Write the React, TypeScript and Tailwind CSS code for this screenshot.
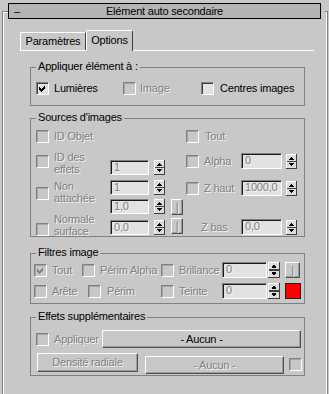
import React from 'react';

const dis = 'text-[#808080] [text-shadow:1px_1px_0_#f4f4f4]';

type CbProps = { checked?: boolean; disabled?: boolean; className?: string };

function Checkbox({ checked, disabled, className = '' }: CbProps) {
  return (
    <div
      className={`h-[13px] w-[13px] shrink-0 border border-t-[#808080] border-l-[#808080] border-b-white border-r-white ${className}`}
    >
      <div
        className={`flex h-full w-full items-center justify-center ${
          disabled
            ? 'bg-[#c8c8c8] shadow-[inset_1px_1px_0_#a4a4a4]'
            : 'bg-[#e2e2e2] shadow-[inset_1px_1px_0_#404040]'
        }`}
      >
        {checked && (
          <svg width="9" height="9" viewBox="0 0 9 9" shapeRendering="crispEdges">
            <polygon
              points="1,3 3,5 7,1 7,4 3,8 1,6"
              fill={disabled ? '#808080' : '#000'}
            />
          </svg>
        )}
      </div>
    </div>
  );
}

type FieldProps = { value: string; className?: string };

function Field({ value, className = '' }: FieldProps) {
  return (
    <div
      className={`shrink-0 border border-t-[#808080] border-l-[#808080] border-b-white border-r-white ${className}`}
    >
      <div
        className={`h-full overflow-hidden bg-[#e2e2e2] pl-[3px] leading-[13px] shadow-[inset_1px_1px_0_#1a1a1a] ${dis}`}
      >
        {value}
      </div>
    </div>
  );
}

function Arrows({ className = '' }: { className?: string }) {
  return (
    <svg
      width="11"
      height="15"
      viewBox="0 0 11 15"
      shapeRendering="crispEdges"
      className={`shrink-0 ${className}`}
    >
      <rect x="0" y="0" width="11" height="15" fill="#dcdcdc" />
      <rect x="0" y="0" width="11" height="1" fill="#ffffff" />
      <rect x="0" y="0" width="1" height="15" fill="#ffffff" />
      <rect x="0" y="14" width="11" height="1" fill="#404040" />
      <rect x="10" y="0" width="1" height="15" fill="#404040" />
      <rect x="1" y="7" width="9" height="1" fill="#404040" />
      <polygon points="2.5,6 8.5,6 5.5,2.5" fill="#000" />
      <polygon points="2.5,9 8.5,9 5.5,12.5" fill="#000" />
    </svg>
  );
}

type BtnProps = { children: React.ReactNode; disabled?: boolean; className?: string };

function Btn({ children, disabled, className = '' }: BtnProps) {
  return (
    <div
      className={`flex shrink-0 items-center justify-center border border-t-white border-l-white border-b-[#505050] border-r-[#505050] bg-[#c8c8c8] shadow-[inset_-1px_-1px_0_#9c9c9c] ${
        disabled ? dis : 'text-black'
      } ${className}`}
    >
      {children}
    </div>
  );
}

type GroupProps = { title: string; className?: string; children: React.ReactNode };

function Group({ title, className = '', children }: GroupProps) {
  return (
    <div className={`relative w-[275px] border border-[#808080] ${className}`}>
      <div className="absolute -top-[8px] left-[5px] bg-[#c8c8c8] px-[2px] leading-[13px]">
        {title}
      </div>
      {children}
    </div>
  );
}

function TwoLines({ a, b }: { a: string; b: string }) {
  return (
    <div className={`ml-[5px] w-[51px] shrink-0 leading-[12px] ${dis}`}>
      <div>{a}</div>
      <div>{b}</div>
    </div>
  );
}

export default function App() {
  return (
    <div className="flex h-[394px] w-[329px] overflow-hidden bg-[#c8c8c8] font-['Liberation_Sans',Arial,sans-serif] text-[11px] leading-[13px] tracking-[-0.2px] text-black">
      <div className="w-[2px] shrink-0" />
      <div className="mt-[11px] h-[383px] w-[6px] shrink-0 border-l border-t border-[#808080] shadow-[inset_1px_1px_0_#fff]" />

      <div className="w-[313px] shrink-0">
        {/* rollout title */}
        <div className="mt-[3px] flex h-[16px] items-center border border-black bg-[#b4b4b4]">
          <span className="w-[24px] pl-[5px]">–</span>
          <span className="flex-1 text-center">Elément auto secondaire</span>
          <span className="w-[24px]" />
        </div>

        {/* tabs */}
        <div className="ml-[12px] mt-[11px] w-[294px]">
          <div className="flex h-[20px] items-end">
            <div className="flex h-[18px] w-[66px] items-center justify-center rounded-tl-[2px] border-l border-t border-r border-l-white border-t-white border-r-[#404040]">
              Paramètres
            </div>
            <div className="relative z-10 -mb-[1px] flex h-[21px] w-[47px] items-center justify-center rounded-t-[2px] border-l border-t border-r border-l-white border-t-white border-r-[#404040] bg-[#c8c8c8] pb-[1px]">
              Options
            </div>
          </div>

          <div className="border-t border-t-white pl-[10px]">
            {/* Appliquer élément à */}
            <Group title="Appliquer élément à :" className="mt-[16px] h-[39px]">
              <div className="flex items-center pl-[5px] pt-[14px]">
                <div className="flex w-[87px] items-center">
                  <Checkbox checked />
                  <span className="ml-[5px]">Lumières</span>
                </div>
                <div className="flex w-[78px] items-center">
                  <Checkbox disabled />
                  <span className={`ml-[4px] ${dis}`}>Image</span>
                </div>
                <div className="flex items-center">
                  <Checkbox />
                  <span className="ml-[6px]">Centres images</span>
                </div>
              </div>
            </Group>

            {/* Sources d'images */}
            <Group title="Sources d'images" className="mt-[12px] h-[119px]">
              <div className="flex pl-[5px]">
                <div className="w-[150px] shrink-0">
                  <div className="mt-[11px] flex h-[13px] items-center">
                    <Checkbox disabled />
                    <span className={`ml-[5px] ${dis}`}>ID Objet</span>
                  </div>

                  <div className="mt-[8px] flex h-[26px] items-start">
                    <Checkbox disabled className="mt-[4px]" />
                    <TwoLines a="ID des" b="effets" />
                    <Field value="1" className="ml-[5px] mt-[9px] h-[15px] w-[39px]" />
                    <Arrows className="ml-[5px] mt-[9px]" />
                  </div>

                  <div className="mt-[3px] flex h-[33px] items-start">
                    <Checkbox disabled className="mt-[7px]" />
                    <TwoLines a="Non" b="attachée" />
                    <div className="ml-[5px]">
                      <div className="flex">
                        <Field value="1" className="h-[15px] w-[39px]" />
                        <Arrows className="ml-[5px]" />
                      </div>
                      <div className="mt-[4px] flex">
                        <Field value="1,0" className="h-[15px] w-[39px]" />
                        <Arrows className="ml-[5px]" />
                        <Btn disabled className="ml-[6px] h-[16px] w-[12px]">|</Btn>
                      </div>
                    </div>
                  </div>

                  <div className="flex h-[23px] items-start">
                    <Checkbox disabled className="mt-[10px]" />
                    <TwoLines a="Normale" b="surface" />
                    <Field value="0,0" className="ml-[5px] mt-[7px] h-[15px] w-[39px]" />
                    <Arrows className="ml-[5px] mt-[7px]" />
                    <Btn disabled className="ml-[6px] mt-[5px] h-[16px] w-[12px]">|</Btn>
                  </div>
                </div>

                <div className="flex-1">
                  <div className="mt-[11px] flex h-[13px] items-center">
                    <Checkbox disabled />
                    <span className={`ml-[6px] ${dis}`}>Tout</span>
                  </div>
                  <div className="mt-[10px] flex h-[16px] items-center">
                    <Checkbox disabled />
                    <span className={`ml-[5px] w-[37px] ${dis}`}>Alpha</span>
                    <Field value="0" className="h-[16px] w-[41px]" />
                    <Arrows className="ml-[4px]" />
                  </div>
                  <div className="mt-[11px] flex h-[16px] items-center">
                    <Checkbox disabled />
                    <span className={`ml-[5px] w-[37px] ${dis}`}>Z haut</span>
                    <Field value="1000,0" className="h-[16px] w-[41px]" />
                    <Arrows className="ml-[4px]" />
                  </div>
                  <div className="mt-[23px] flex h-[16px] items-center">
                    <span className={`ml-[15px] w-[40px] ${dis}`}>Z bas</span>
                    <Field value="0,0" className="h-[16px] w-[41px]" />
                    <Arrows className="ml-[4px]" />
                  </div>
                </div>
              </div>
            </Group>

            {/* Filtres image */}
            <Group title="Filtres image" className="mt-[16px] h-[51px]">
              <div className="mt-[8px] flex h-[16px] items-center pl-[3px]">
                <Checkbox checked disabled />
                <span className={`ml-[5px] w-[30px] ${dis}`}>Tout</span>
                <Checkbox disabled />
                <span className={`ml-[5px] w-[61px] ${dis}`}>Périm Alpha</span>
                <Checkbox disabled />
                <span className={`ml-[5px] w-[43px] ${dis}`}>Brillance</span>
                <Field value="0" className="h-[16px] w-[45px]" />
                <Arrows className="ml-[1px] h-[16px] w-[12px]" />
                <Btn disabled className="ml-[5px] h-[16px] w-[15px]">|</Btn>
              </div>
              <div className="mt-[5px] flex h-[16px] items-center pl-[3px]">
                <Checkbox disabled />
                <span className={`ml-[5px] w-[36px] ${dis}`}>Arête</span>
                <Checkbox disabled />
                <span className={`ml-[6px] w-[54px] ${dis}`}>Périm</span>
                <Checkbox disabled />
                <span className={`ml-[5px] w-[43px] ${dis}`}>Teinte</span>
                <Field value="0" className="h-[16px] w-[45px]" />
                <Arrows className="ml-[1px] h-[16px] w-[12px]" />
                <div className="ml-[5px] h-[16px] w-[16px] border border-[#202020] bg-[#ff0000]" />
              </div>
            </Group>

            {/* Effets supplémentaires */}
            <Group title="Effets supplémentaires" className="mt-[13px] h-[59px]">
              <div className="mt-[12px] flex h-[18px] items-center pl-[5px]">
                <Checkbox disabled />
                <span className={`ml-[5px] w-[48px] ${dis}`}>Appliquer</span>
                <Btn className="h-[18px] w-[199px]">- Aucun -</Btn>
              </div>
              <div className="mt-[5px] flex items-start pl-[6px]">
                <Btn disabled className="h-[19px] w-[101px]">
                  Densité radiale
                </Btn>
                <Btn disabled className="ml-[7px] mt-[3px] h-[18px] w-[139px]">
                  - Aucun -
                </Btn>
                <Checkbox disabled className="ml-[5px] mt-[5px]" />
              </div>
            </Group>
          </div>
        </div>
      </div>

      <div className="w-[4px] shrink-0" />
      <div className="mt-[11px] h-[383px] w-[3px] shrink-0 border-t border-r border-[#808080] shadow-[inset_-1px_0_0_#fff]" />
      <div className="w-[1px] shrink-0" />
    </div>
  );
}
